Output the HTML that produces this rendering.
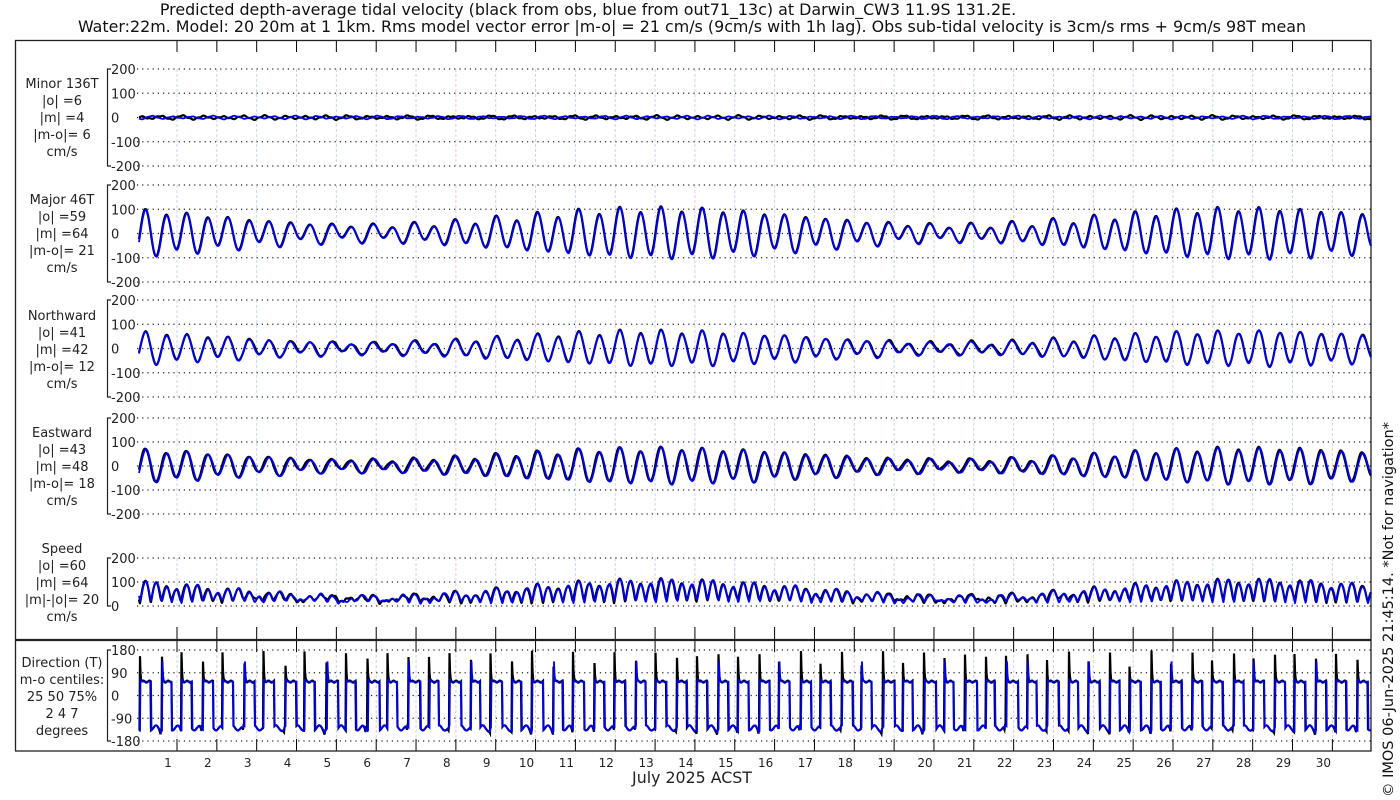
<!DOCTYPE html>
<html><head><meta charset="utf-8"><style>
html,body{margin:0;padding:0;background:#fff;}
svg{display:block;font-family:"DejaVu Sans","Liberation Sans",sans-serif;}
</style></head><body>
<svg id="s" width="1400" height="800" viewBox="0 0 1400 800" xmlns="http://www.w3.org/2000/svg">
<text x="588" y="15" font-size="15.9" text-anchor="middle" fill="#111">Predicted depth-average tidal velocity (black from obs, blue from out71_13c) at Darwin_CW3 11.9S 131.2E.</text>
<text x="692" y="32" font-size="15.9" text-anchor="middle" fill="#111">Water:22m. Model: 20 20m at 1 1km. Rms model vector error |m-o| = 21 cm/s (9cm/s with 1h lag). Obs sub-tidal velocity is 3cm/s rms + 9cm/s 98T mean</text>
<text x="692" y="783" font-size="15.8" text-anchor="middle" fill="#222">July 2025 ACST</text>
<text transform="translate(1393,797) rotate(-90)" font-size="14.5" fill="#111">© IMOS 06-Jun-2025 21:45:14. *Not for navigation*</text>
<g id="g"></g>
</svg>
<script>
var NS="http://www.w3.org/2000/svg",g=document.getElementById('g');
function el(t,a,txt){var e=document.createElementNS(NS,t);for(var k in a)e.setAttribute(k,a[k]);if(txt!==undefined)e.textContent=txt;g.appendChild(e);return e;}
var X0=139,X1=1371,DX=39.84;
function tOf(x){return (x-148)/DX;}
var panels=[
 {top:69,bot:166,vals:[200,100,0,-100,-200],vmax:200,vmin:-200,lab:["Minor 136T","|o| =6","|m| =4","|m-o|= 6","cm/s"],ly:88},
 {top:185,bot:282,vals:[200,100,0,-100,-200],vmax:200,vmin:-200,lab:["Major 46T","|o| =59","|m| =64","|m-o|= 21","cm/s"],ly:204},
 {top:300,bot:397,vals:[200,100,0,-100,-200],vmax:200,vmin:-200,lab:["Northward","|o| =41","|m| =42","|m-o|= 12","cm/s"],ly:320},
 {top:418,bot:514,vals:[200,100,0,-100,-200],vmax:200,vmin:-200,lab:["Eastward","|o| =43","|m| =48","|m-o|= 18","cm/s"],ly:437},
 {top:558,bot:606,vals:[200,100,0],vmax:200,vmin:0,lab:["Speed","|o| =60","|m| =64","|m|-|o|= 20","cm/s"],ly:553},
 {top:650,bot:741,vals:[180,90,0,-90,-180],vmax:180,vmin:-180,lab:["Direction (T)","m-o centiles:","25  50  75%","2  4  7","degrees"],ly:667}
];
for(var k=0;k<30;k++){var x=177+DX*k;
 [[69,166],[185,282],[300,397],[418,514],[558,606],[650,741]].forEach(function(r){el('line',{x1:x,x2:x,y1:r[0],y2:r[1],stroke:(k%2?'#e8c8d8':'#c8d4ec'),'stroke-width':1,'stroke-dasharray':'3,2'});});
 el('line',{x1:x,x2:x,y1:40,y2:52,stroke:'#000'});
 el('line',{x1:x,x2:x,y1:627,y2:652,stroke:'#000'});
 el('line',{x1:x,x2:x,y1:739,y2:751,stroke:'#000'});
}
for(var d=1;d<=30;d++)el('text',{x:168+DX*(d-1),y:767,'font-size':12,'text-anchor':'middle',fill:'#222'},String(d));
el('rect',{x:15.5,y:40.5,width:1355.5,height:710.5,fill:'none',stroke:'#222','stroke-width':1.3});
el('line',{x1:15,x2:1371,y1:640,y2:640,stroke:'#222','stroke-width':2.2});
panels.forEach(function(p){
 function Y(v){return p.top+(p.vmax-v)/(p.vmax-p.vmin)*(p.bot-p.top);}
 p.Y=Y;
 el('path',{d:'M111,'+p.top+'H107.5V'+p.bot+'H111',stroke:'#222',fill:'none','stroke-width':1.2});
 p.vals.forEach(function(v){var y=Y(v);
  el('line',{x1:137,x2:1371,y1:y,y2:y,stroke:'#222','stroke-width':1.2,'stroke-dasharray':'1.2,4'});
  el('text',{x:111,y:y+5,'font-size':13,fill:'#222'},String(v));});
 p.lab.forEach(function(s,i){el('text',{x:62,y:p.ly+i*17,'font-size':13,'text-anchor':'middle',fill:'#222','xml:space':'preserve'},s);});
});
var wM=2*Math.PI/0.5175,wK=2*Math.PI/0.9973;
function uv(t,obs){
 var A=64+34*Math.cos(2*Math.PI*(t-12.9)/14.77);
 var ph=obs?0.12:0;
 var u=A*Math.cos(wM*t+0.6+ph)+14*Math.cos(wK*t+1.1+ph)+(obs?3:0);
 var v=(obs?-6:5)*Math.sin(wM*t+0.6)+(obs?2:-1)*Math.sin(t*37)+2*Math.sin(t*9);
 return [u,v];
}
function draw(fn,p,color,w){
 var d='',prev=null;
 for(var x=X0;x<=X1;x+=0.5){var v=fn(tOf(x));if(v===null){prev=null;continue;}
  var y=p.Y(v);
  if(prev===null||Math.abs(v-prev)>150)d+='M'+x.toFixed(1)+','+y.toFixed(1);else d+='L'+x.toFixed(1)+','+y.toFixed(1);
  prev=v;}
 el('path',{d:d,stroke:color,fill:'none','stroke-width':w,'stroke-linejoin':'round'});
}
var c46=Math.cos(46*Math.PI/180),s46=Math.sin(46*Math.PI/180);
var defs=[
 function(t,o){return uv(t,o)[1];},
 function(t,o){return uv(t,o)[0];},
 function(t,o){var a=uv(t,o);return a[0]*c46-a[1]*s46;},
 function(t,o){var a=uv(t,o);return a[0]*s46+a[1]*c46;},
 function(t,o){var a=uv(t,o);return Math.min(200,Math.sqrt(a[0]*a[0]+a[1]*a[1]*9)+4);}
];
for(var i=0;i<5;i++){(function(i){
 draw(function(t){return defs[i](t,true);},panels[i],'#000',2.2);
 draw(function(t){return defs[i](t,false);},panels[i],'#0000ee',1.8);})(i);}
// direction: square-ish wave with spikes after switching to flood
function dirPath(obs,color,w){
 var p=panels[5],d='',sgn=null,tsw=-1,n=0;
 for(var x=X0;x<=X1;x+=0.5){
  var t=tOf(x),u=uv(t,obs)[0];var s=u>0?1:-1;
  if(sgn!==null&&s!==sgn){tsw=t;n++;}
  var dt=t-tsw,th;
  var r=Math.sin(n*2.3+(obs?0:1.7));
  if(s>0){
   var spike=obs?(60+60*Math.abs(r)):(r>0.6?80:10);
   th=55+spike*Math.exp(-dt/0.012)+ (obs?4:0)*Math.sin(t*40);
  }else{
   th=-128-10*Math.sin(t*23)-(obs?25:12)*Math.exp(-Math.max(0,0.25-dt)/0.03)*(dt<0.25?1:0);
  }
  th=Math.max(-178,Math.min(178,th));
  var y=p.Y(th);
  var jump=(sgn!==null&&s!==sgn);
  d+=(d===''?'M':'L')+x.toFixed(1)+','+y.toFixed(1);
  sgn=s;
 }
 el('path',{d:d,stroke:color,fill:'none','stroke-width':w,'stroke-linejoin':'miter'});
}
dirPath(true,'#000',2.2);
dirPath(false,'#0000ee',1.8);
</script>
</body></html>
